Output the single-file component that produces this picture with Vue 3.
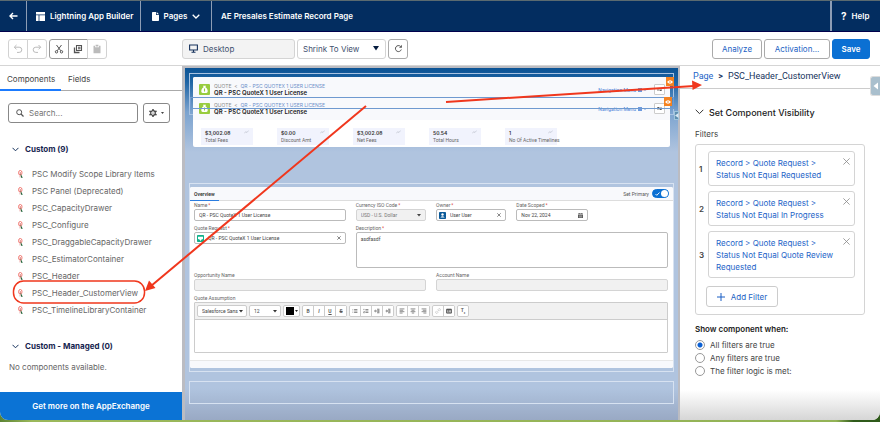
<script setup>
import { ref } from 'vue'

const search = ref('')
const fit = ref('Shrink To View')
const device = ref('Desktop')
const showWhen = ref('all')
const primary = ref(true)

const components = [
  'PSC Modify Scope Library Items',
  'PSC Panel (Deprecated)',
  'PSC_CapacityDrawer',
  'PSC_Configure',
  'PSC_DraggableCapacityDrawer',
  'PSC_EstimatorContainer',
  'PSC_Header',
  'PSC_Header_CustomerView',
  'PSC_TimelineLibraryContainer'
]

const metrics = [
  { value: '$3,002.08', label: 'Total Fees' },
  { value: '$0.00', label: 'Discount Amt' },
  { value: '$3,002.08', label: 'Net Fees' },
  { value: '50.54', label: 'Total Hours' },
  { value: '1', label: 'No Of Active Timelines' }
]

const filters = ref([
  'Status Not Equal Requested',
  'Status Not Equal In Progress',
  'Status Not Equal Quote Review Requested'
])

const rules = [
  { id: 'all', label: 'All filters are true' },
  { id: 'any', label: 'Any filters are true' },
  { id: 'logic', label: 'The filter logic is met:' }
]

// editor buttons, drawn on a 10x10 grid
const editorGroups = [
  [
    { name: 'Bold', letter: 'B' },
    { name: 'Italic', letter: 'I' },
    { name: 'Underline', letter: 'U' },
    { name: 'Strikethrough', letter: 'S' }
  ],
  [
    { name: 'Bulleted list', d: 'M3.5 2.5H9M3.5 5H9M3.5 7.5H9M1 2.5h1M1 5h1M1 7.5h1' },
    { name: 'Numbered list', d: 'M4 2.5H9M4 5H9M4 7.5H9M1.5 1.5v2M1 6h1.5L1 8h1.5' },
    { name: 'Indent', d: 'M5 2H9M1 5H9M5 8H9M3 3.2L1 5l2 1.8M6 3.5h3M6 6.5h3' },
    { name: 'Outdent', d: 'M5 2H9M1 5H9M5 8H9M2 3.2L4 5l-2 1.8M6 3.5h3M6 6.5h3' }
  ],
  [
    { name: 'Align left', d: 'M1 1.5H9M1 3.8H7M1 6.1H9M1 8.4H6' },
    { name: 'Align center', d: 'M1 1.5H9M2.5 3.8H7.5M1 6.1H9M3 8.4H7' },
    { name: 'Align right', d: 'M1 1.5H9M3 3.8H9M1 6.1H9M4 8.4H9' }
  ],
  [
    { name: 'Link', d: 'M4 6L6.5 3.5M4.5 3L6 1.5a1.6 1.6 0 0 1 2.4 2.4L7 5.4M5.5 7L4 8.5a1.6 1.6 0 0 1-2.4-2.4L3 4.6', off: true },
    { name: 'Image', d: 'M1 2h8v6.5H1zM1.5 2.6h7M2 6.8h6M3 5h2M2 3.5h6', bold: true }
  ],
  [{ name: 'Remove formatting', letter: 'T', sub: 'x' }]
]

function removeFilter(index) {
  filters.value.splice(index, 1)
}
</script>

<template>
  <div class="desktop">
    <div class="window">
      <header class="top-bar">
        <a class="top-cell back" href="#" aria-label="Back">
          <svg width="9" height="8" viewBox="0 0 9 8"><path d="M8.5 4H1.5M4 1L1 4l3 3" fill="none" stroke="#fff" stroke-width="1.4" /></svg>
        </a>
        <a class="top-cell builder" href="#">
          <svg width="9" height="9" viewBox="0 0 9 9"><path d="M0 0h9v2.5H0zM0 3.3h2.6V9H0zM3.4 3.3H9V9H3.4z" fill="#fff" /></svg>
          Lightning App Builder
        </a>
        <button class="top-cell pages" type="button">
          <svg width="7" height="9" viewBox="0 0 7 9"><path d="M.8 0H4v3h3v5.2a.8.8 0 0 1-.8.8H.8a.8.8 0 0 1-.8-.8V.8A.8.8 0 0 1 .8 0zM4.7 0L7 2.3H4.7z" fill="#fff" /></svg>
          Pages
          <svg width="8" height="5" viewBox="0 0 8 5"><path d="M.7.7L4 4 7.3.7" fill="none" stroke="#fff" stroke-width="1.3" /></svg>
        </button>
        <div class="top-cell page-name">AE Presales Estimate Record Page</div>
        <a class="top-cell help" href="#"><span class="question">?</span> Help</a>
      </header>

      <div class="toolbar">
        <div class="tools">
          <div class="button-group">
            <button type="button" class="tool off" aria-label="Undo">
              <svg width="10" height="10" viewBox="0 0 10 10"><path d="M3.5 1L1.3 3.2l2.2 2.2M1.5 3.2h4.7a2.6 2.6 0 0 1 0 5.200H4" fill="none" stroke="currentColor" /></svg>
            </button>
            <button type="button" class="tool off" aria-label="Redo">
              <svg width="10" height="10" viewBox="0 0 10 10"><path d="M6.5 1l2.2 2.2-2.2 2.2M8.5 3.2H3.8a2.6 2.6 0 0 0 0 5.200H6" fill="none" stroke="currentColor" /></svg>
            </button>
          </div>
          <div class="button-group">
            <button type="button" class="tool" aria-label="Cut">
              <svg width="10" height="10" viewBox="0 0 10 10"><path d="M2.5 1l4.300 5.800M7.500 1L3.200 6.800" fill="none" stroke="currentColor" /><circle cx="2.500" cy="7.800" r="1.200" fill="none" stroke="currentColor" /><circle cx="7.500" cy="7.800" r="1.200" fill="none" stroke="currentColor" /></svg>
            </button>
            <button type="button" class="tool" aria-label="Copy">
              <svg width="10" height="10" viewBox="0 0 10 10"><path d="M3.500 1.500h5v5h-5zM5 3.300h2.500M5 4.800h2.500" fill="none" stroke="currentColor" stroke-width="1.100" /><path d="M1.500 3.500v5h5" fill="none" stroke="currentColor" stroke-width="1.300" /></svg>
            </button>
            <button type="button" class="tool off" aria-label="Paste">
              <svg width="10" height="10" viewBox="0 0 10 10"><path d="M1.500 1.800H3v1.400h4V1.800h1.500v7.400h-7zM3.600.8h2.800v1.600H3.600z" fill="currentColor" /></svg>
            </button>
          </div>
        </div>
        <div class="view-tools">
          <label class="picker device">
            <svg width="9" height="9" viewBox="0 0 9 9"><path d="M.6 1h7.800v5H.6zM4.500 6v2M2.500 8.200h4" fill="none" stroke="#16325c" stroke-width="1.100" /></svg>
            <select v-model="device" aria-label="Device"><option>Desktop</option></select>
          </label>
          <label class="picker fit">
            <select v-model="fit" aria-label="Zoom"><option>Shrink To View</option></select>
            <svg width="6" height="5" viewBox="0 0 6 5"><path d="M0 0h6L3 4.500z" fill="#061c3f" /></svg>
          </label>
          <button type="button" class="square" aria-label="Refresh">
            <svg width="9" height="9" viewBox="0 0 9 9"><path d="M7.300 5.500A3 3 0 1 1 6.500 2.400" fill="none" stroke="#555" /><path d="M7.900.8v3H5z" fill="#555" /></svg>
          </button>
        </div>
        <div class="actions">
          <button type="button" class="action">Analyze</button>
          <button type="button" class="action wide">Activation...</button>
          <button type="button" class="action save">Save</button>
        </div>
      </div>

      <div class="panels">
        <aside class="left-panel">
          <nav class="tabs">
            <a class="tab active" href="#">Components</a>
            <a class="tab" href="#">Fields</a>
          </nav>
          <div class="search-row">
            <label class="search">
              <svg width="8" height="8" viewBox="0 0 8 8"><circle cx="3.200" cy="3.200" r="2.500" fill="none" stroke="#555" /><path d="M5 5l2.500 2.500" stroke="#555" stroke-width="1.200" /></svg>
              <input v-model="search" type="text" placeholder="Search..." aria-label="Search" />
            </label>
            <button type="button" class="gear" aria-label="Settings">
              <svg width="8" height="8" viewBox="0 0 8 8"><circle cx="4" cy="4" r="2.300" fill="none" stroke="#444" stroke-width="1.200" /><path d="M4 0v1.500M4 6.500V8M.5 2l1.300.8M6.200 5.200l1.300.8M.5 6l1.300-.8M6.200 2.800L7.500 2" stroke="#444" stroke-width="1.500" /><circle cx="4" cy="4" r=".6" fill="#444" /></svg>
              <svg width="3" height="2" viewBox="0 0 3 2"><path d="M0 0h3L1.500 2z" fill="#444" /></svg>
            </button>
          </div>
          <h2 class="group-title">
            <svg width="7" height="5" viewBox="0 0 7 5"><path d="M.5.8l3 3 3-3" fill="none" stroke="#16325c" /></svg>
            Custom (9)
          </h2>
          <ul class="component-list">
            <li v-for="name in components" :key="name">
              <svg width="5" height="8" viewBox="0 0 5 8"><ellipse cx="2.300" cy="2.800" rx="1.700" ry="2.400" fill="#fff" stroke="#ee6a62" stroke-width=".9" /><path d="M2.300 2v3M1.500 6.800h1" stroke="#d9534f" stroke-width=".7" /><path d="M2.500 3.500L4.800 7.800H3z" fill="#22663c" /></svg>
              {{ name }}
            </li>
          </ul>
          <h2 class="group-title managed">
            <svg width="7" height="5" viewBox="0 0 7 5"><path d="M.5.8l3 3 3-3" fill="none" stroke="#16325c" /></svg>
            Custom - Managed (0)
          </h2>
          <p class="none">No components available.</p>
          <a class="exchange" href="#">Get more on the AppExchange</a>
        </aside>

        <main class="canvas">
          <section class="header-region">
            <div class="quote-card">
              <div v-for="n in 2" :key="n" class="quote-header">
                <svg class="quote-icon" width="11" height="11" viewBox="0 0 11 11"><rect width="11" height="11" rx="1" fill="#98cc3f" /><path d="M4 1.800h3l-.6 1.500c1.600.9 2.300 2.400 2.300 4 0 1-.6 1.700-1.400 1.700H3.700c-.8 0-1.400-.7-1.400-1.700 0-1.600.7-3.100 2.300-4z" fill="#fff" /><path d="M5.500 4.500v3" stroke="#98cc3f" stroke-width="1.100" /></svg>
                <div class="quote-text">
                  <div class="crumbs">QUOTE &nbsp;&lt;&nbsp; <a href="#">QR - PSC QUOTEX 1 USER LICENSE</a></div>
                  <h1>QR - PSC QuoteX 1 User License</h1>
                </div>
                <a class="nav-menu" href="#">
                  Navigation Menu
                  <svg width="8" height="4" viewBox="0 0 8 4"><path d="M0 0h4v4H0z" fill="#6d9be0" /><path d="M6 1.500h2L7 3z" fill="#3d7fe0" /></svg>
                </a>
                <button type="button" class="swap" aria-label="Refresh quote">
                  <svg width="5" height="5" viewBox="0 0 5 5"><path d="M1 4V1.500h1.500M4 1v2.500H2.500M0 2.200l1-1 1 1M3 2.800l1 1 1-1" fill="none" stroke="#444" stroke-width=".7" /></svg>
                </button>
              </div>
              <div class="metrics">
                <div v-for="m in metrics" :key="m.label" class="metric">
                  <div class="metric-value">
                    {{ m.value }}
                    <svg width="5" height="4" viewBox="0 0 5 4"><path d="M.4 3.300l1.300-1.600 1.200.8L4.600.6" fill="none" stroke="#b4b8c4" stroke-width=".6" /></svg>
                  </div>
                  <div class="metric-label">{{ m.label }}</div>
                </div>
              </div>
            </div>
            <div class="selected-frame"></div>
            <span class="badge first"><svg width="6" height="4" viewBox="0 0 6 4"><path d="M0 2q3-3.500 6 0-3 3.500-6 0" fill="#fff" /><circle cx="3" cy="2" r=".8" fill="#f58220" /></svg></span>
            <span class="badge second"><svg width="6" height="4" viewBox="0 0 6 4"><path d="M0 2q3-3.500 6 0-3 3.500-6 0" fill="#fff" /><circle cx="3" cy="2" r=".8" fill="#f58220" /></svg></span>
            <span class="edge-mark"><svg width="4" height="5" viewBox="0 0 4 5"><path d="M3.500 0v5L0 2.500z" fill="#dce8f2" /></svg></span>
          </section>

          <section class="form-region">
            <form class="form-card" @submit.prevent>
              <div class="form-tabs">
                <a class="form-tab" href="#">Overview</a>
                <label class="primary">
                  Set Primary
                  <input v-model="primary" type="checkbox" />
                  <span class="switch"><svg width="5" height="4" viewBox="0 0 5 4"><path d="M.5 2l1.300 1.300L4.500.5" fill="none" stroke="#fff" stroke-width=".9" /></svg></span>
                </label>
              </div>
              <div class="fields">
                <div class="field name">
                  <label for="name">Name<i>*</i></label>
                  <div class="box"><input id="name" type="text" value="QR - PSC QuoteX 1 User License" /></div>
                </div>
                <div class="field">
                  <label for="currency">Currency ISO Code<i>*</i></label>
                  <div class="box disabled">
                    <select id="currency" disabled><option>USD - U.S. Dollar</option></select>
                    <svg width="4" height="3" viewBox="0 0 4 3"><path d="M0 0h4L2 2.500z" fill="#444" /></svg>
                  </div>
                </div>
                <div class="field">
                  <label for="owner">Owner<i>*</i></label>
                  <div class="box lookup">
                    <svg width="7" height="7" viewBox="0 0 7 7"><rect width="7" height="7" rx=".8" fill="#0b5a99" /><circle cx="3.500" cy="2.500" r="1.200" fill="#fff" /><path d="M1.300 5.500q2.200-2.500 4.400 0z" fill="#fff" /></svg>
                    <input id="owner" type="text" value="User User" />
                    <button type="button" aria-label="Clear owner"><svg width="4" height="4" viewBox="0 0 4 4"><path d="M.3.3l3.400 3.400M3.700.3L.3 3.700" stroke="#555" stroke-width=".7" /></svg></button>
                  </div>
                </div>
                <div class="field">
                  <label for="scoped">Date Scoped<i>*</i></label>
                  <div class="box">
                    <input id="scoped" type="text" value="Nov 22, 2024" />
                    <svg width="5" height="5" viewBox="0 0 5 5"><path d="M0 .6h5v1H0zM0 2h5v3H0zM1 0h.6v1H1zM3.400 0H4v1h-.6z" fill="#555" /><path d="M.8 3h3.400M.8 4h3.400" stroke="#fff" stroke-width=".4" /></svg>
                  </div>
                </div>
                <div class="field request">
                  <label for="request">Quote Request<i>*</i></label>
                  <div class="box lookup">
                    <svg width="7" height="7" viewBox="0 0 7 7"><rect width="7" height="7" rx=".8" fill="#10b28b" /><path d="M1 1.800h5V4L4.500 4.600 3.500 6 2.500 4.600 1 4z" fill="#fff" /></svg>
                    <input id="request" type="text" value="QR - PSC QuoteX 1 User License" />
                    <button type="button" aria-label="Clear quote request"><svg width="4" height="4" viewBox="0 0 4 4"><path d="M.3.3l3.400 3.400M3.700.3L.3 3.700" stroke="#555" stroke-width=".7" /></svg></button>
                  </div>
                </div>
                <div class="field description">
                  <label for="description">Description<i>*</i></label>
                  <textarea id="description">asdfasdf</textarea>
                </div>
                <div class="field half">
                  <label for="opportunity">Opportunity Name</label>
                  <div class="box disabled"><input id="opportunity" type="text" disabled /></div>
                </div>
                <div class="field half-end">
                  <label for="account">Account Name</label>
                  <div class="box disabled"><input id="account" type="text" disabled /></div>
                </div>
                <div class="field full">
                  <label for="assumption">Quote Assumption</label>
                  <div class="editor">
                    <div class="editor-bar">
                      <div class="box font">
                        <select aria-label="Font"><option>Salesforce Sans</option></select>
                        <svg width="4" height="3" viewBox="0 0 4 3"><path d="M0 0h4L2 2.500z" fill="#333" /></svg>
                      </div>
                      <div class="box size">
                        <select aria-label="Font size"><option>12</option></select>
                        <svg width="4" height="3" viewBox="0 0 4 3"><path d="M0 0h4L2 2.500z" fill="#333" /></svg>
                      </div>
                      <button type="button" class="color" aria-label="Text color">
                        <span class="swatch"></span>
                        <svg width="3" height="2" viewBox="0 0 3 2"><path d="M0 0h3L1.500 2z" fill="#222" /></svg>
                      </button>
                      <div v-for="(group, g) in editorGroups" :key="g" class="editor-group">
                        <button v-for="b in group" :key="b.name" type="button" :class="[b.name.toLowerCase(), { off: b.off }]" :aria-label="b.name">
                          <span v-if="b.letter">{{ b.letter }}<sub v-if="b.sub">{{ b.sub }}</sub></span>
                          <svg v-else width="6" height="6" viewBox="0 0 10 10"><path :d="b.d" fill="none" stroke="currentColor" :stroke-width="b.bold ? 1.6 : 1.1" /></svg>
                        </button>
                      </div>
                    </div>
                    <textarea id="assumption"></textarea>
                  </div>
                </div>
              </div>
              <div class="form-footer"></div>
            </form>
          </section>

          <section class="empty-region"></section>
        </main>

        <aside class="right-panel">
          <button type="button" class="collapse" aria-label="Collapse panel">
            <svg width="6" height="8" viewBox="0 0 6 8"><path d="M5 .5v7L.5 4z" fill="#fff" /></svg>
          </button>
          <nav class="path"><a href="#">Page</a><b>&gt;</b><span>PSC_Header_CustomerView</span></nav>
          <div class="visibility">
            <h2>
              <svg width="9" height="6" viewBox="0 0 9 6"><path d="M.7.8l3.800 3.800L8.300.8" fill="none" stroke="#333" /></svg>
              Set Component Visibility
            </h2>
            <p class="caption">Filters</p>
            <div class="filter-box">
              <div v-for="(text, i) in filters" :key="text" class="filter-row">
                <span class="number">{{ i + 1 }}</span>
                <div class="filter">
                  <a href="#">Record &gt; Quote Request &gt;<br />{{ text }}</a>
                  <button type="button" aria-label="Remove filter" @click="removeFilter(i)">
                    <svg width="7" height="7" viewBox="0 0 7 7"><path d="M.4.4l6.200 6.200M6.600.4L.4 6.600" stroke="#888" stroke-width=".8" /></svg>
                  </button>
                </div>
              </div>
              <button type="button" class="add">
                <svg width="8" height="8" viewBox="0 0 8 8"><path d="M4 0v8M0 4h8" stroke="#1b5fc4" /></svg>
                Add Filter
              </button>
            </div>
            <fieldset>
              <legend>Show component when:</legend>
              <label v-for="rule in rules" :key="rule.id" class="rule">
                <input v-model="showWhen" type="radio" name="rule" :value="rule.id" />
                {{ rule.label }}
              </label>
            </fieldset>
          </div>
        </aside>
      </div>
    </div>

    <svg class="notes" viewBox="0 0 880 422" preserveAspectRatio="none">
      <g fill="none" stroke="#f0371d" stroke-width="2">
        <path d="M366 106L151 286" />
        <path d="M446 102L694 86" />
        <rect x="13.500" y="281" width="131" height="22" rx="10" stroke-width="1.500" />
      </g>
      <path d="M145 291l4-10.500 6.500 7.500zM702 85l-10-4.500.6 9.500z" fill="#f0371d" />
    </svg>
  </div>
</template>

<style>
body {
  margin: 0;
}
</style>

<style scoped>
.desktop {
  position: relative;
  min-height: 100vh;
  display: flex;
  flex-direction: column;
  box-sizing: border-box;
  padding-bottom: 2px;
  background: linear-gradient(90deg, #5c8434 0, #9bb85b 32px, #93b356 95%, #2f5a1a 97%);
  font-family: Inter, "Liberation Sans", sans-serif;
  font-size: 8px;
  color: #444;
}

.desktop * {
  box-sizing: border-box;
}

.window {
  flex: 1;
  display: flex;
  flex-direction: column;
  background: #fff;
  border-radius: 0 0 8px 8px;
  overflow: hidden;
}

svg {
  display: block;
  flex: none;
}

a {
  color: #2464c8;
  text-decoration: none;
}

button, input, select, textarea {
  font: inherit;
  color: inherit;
  margin: 0;
  padding: 0;
}

button {
  display: flex;
  align-items: center;
  justify-content: center;
  border: 0;
  background: #fff;
}

input[type='text'], select, textarea {
  flex: 1;
  min-width: 0;
  width: 100%;
  border: 0;
  outline: 0;
  background: transparent;
  appearance: none;
}

select {
  opacity: 1;
}

h1, h2, p, ul {
  margin: 0;
  padding: 0;
}

/* top bar */
.top-bar {
  display: flex;
  height: 32px;
  border-top: 1px solid #5b6a70;
  border-bottom: 1px solid #01014c;
  background: #032d60;
  font-weight: 600;
}

.top-cell {
  display: flex;
  align-items: center;
  gap: 5px;
  padding: 0 9px;
  color: #fff;
  background: #032d60;
  border-right: 1px solid #8d9db5;
  white-space: nowrap;
}

.back {
  width: 27px;
}

.builder {
  width: 114px;
}

.pages {
  width: 71px;
}

.page-name {
  flex: 1;
}

.help {
  width: 49px;
  border-right: 0;
  border-left: 1px solid #8d9db5;
}

.question {
  font-size: 10px;
  font-weight: 700;
}

/* toolbar */
.toolbar {
  display: flex;
  height: 34px;
  align-items: center;
  padding: 0 10px 0 8px;
  border-bottom: 1px solid #d5d5d5;
}

.tools {
  width: 174px;
  display: flex;
  gap: 2px;
}

.button-group {
  display: flex;
}

.tool {
  width: 20px;
  height: 20px;
  border: 1px solid #999;
  color: #555;
}

.tool + .tool {
  margin-left: -1px;
}

.tool:first-child {
  border-radius: 3px 0 0 3px;
}

.tool:last-child {
  border-radius: 0 3px 3px 0;
}

.tool.off {
  border-color: #d2d2d2;
  color: #bbb;
}

.view-tools {
  display: flex;
  gap: 2px;
}

.picker {
  display: flex;
  align-items: center;
  gap: 5px;
  height: 20px;
  padding: 0 6px;
  border: 1px solid #d4d4d4;
  border-radius: 3px;
  color: #3e4f6e;
}

.device {
  width: 113px;
  background: #f3f3f3;
}

.fit {
  width: 89px;
  padding: 0 6px 0 5px;
}

.square {
  width: 20px;
  height: 20px;
  border: 1px solid #aaa;
  border-radius: 3px;
}

.actions {
  flex: 1;
  display: flex;
  justify-content: flex-end;
  gap: 2px;
}

.action {
  width: 50px;
  height: 20px;
  border: 1px solid #aaa;
  border-radius: 3px;
  color: #1b5fc4;
}

.action.wide {
  width: 66px;
}

.action.save {
  width: 38px;
  border-color: #0b70d3;
  background: #0b70d3;
  color: #fff;
  font-weight: 600;
}

.panels {
  flex: 1;
  display: grid;
  grid-template-columns: 182px 1fr 200px;
}

/* components panel */
.left-panel {
  display: flex;
  flex-direction: column;
}

.tabs {
  display: flex;
  height: 25px;
  border-bottom: 1px solid #aaa;
}

.tab {
  display: flex;
  align-items: center;
  padding: 2px 7px 0;
  color: #444;
}

.tab.active {
  width: 61px;
  height: 25px;
  border-bottom: 2px solid #1b7bff;
}

.search-row {
  display: flex;
  gap: 5px;
  padding: 12px 12px 0 8px;
}

.search {
  flex: 1;
  display: flex;
  align-items: center;
  gap: 5px;
  height: 20px;
  padding: 0 7px;
  border: 1px solid #888;
  border-radius: 3px;
}

.search input::placeholder {
  color: #747474;
  opacity: 1;
}

.gear {
  width: 27px;
  height: 20px;
  gap: 4px;
  border: 1px solid #888;
  border-radius: 3px;
}

.group-title {
  display: flex;
  align-items: center;
  gap: 6px;
  height: 16px;
  margin-top: 18px;
  padding-left: 12px;
  font-size: 8px;
  font-weight: 700;
  color: #16254f;
}

.component-list {
  list-style: none;
  margin-top: 8px;
}

.component-list li {
  display: flex;
  align-items: center;
  gap: 9px;
  height: 17px;
  padding-left: 18px;
  color: #666;
}

.managed {
  margin-top: 20px;
}

.none {
  margin-top: 8px;
  padding-left: 9px;
  line-height: 10px;
  color: #666;
}

.exchange {
  display: flex;
  align-items: center;
  justify-content: center;
  height: 28px;
  margin-top: auto;
  background: #0b73d5;
  color: #fff;
  font-weight: 600;
}

/* page preview */
.canvas {
  display: flex;
  flex-direction: column;
  padding: 6px 4px 0;
  border: solid #bbbcc2;
  border-width: 2px 2px 0 3px;
  background: linear-gradient(#0b5394 0, #1e64a4 14px, #7ba3cf 44px, #b0c4df 84px, #b0c4df 320px, #99a9c4 100%);
  font-size: 5px;
}

.header-region {
  position: relative;
  padding: 3px 4px 0;
}

.header-region::before {
  content: "";
  position: absolute;
  inset: -1px 0 auto;
  height: 40px;
  border: 1px solid #a9c3e2;
}

.quote-card {
  position: relative;
  border-radius: 2px;
  overflow: hidden;
  background: #fff;
}

.quote-header {
  display: flex;
  align-items: center;
  gap: 4px;
  height: 20px;
  padding: 5px 5px 0 6px;
  background: #f8f9fc;
}

.quote-header + .quote-header {
  height: 23px;
  padding: 0 5px 0 6px;
}

.quote-text {
  flex: 1;
}

.crumbs {
  line-height: 6px;
  font-size: 5px;
  color: #8a8a8a;
}

.crumbs a {
  color: #6d8fc9;
}

h1 {
  font-size: 6px;
  line-height: 7px;
  font-weight: 600;
  color: #222;
}

.nav-menu {
  display: flex;
  align-items: center;
  gap: 2px;
  margin-right: 4px;
  font-family: Roboto, sans-serif;
  color: #4a82d8;
}

.swap {
  width: 11px;
  height: 11px;
  border: 1px solid #ccc;
  border-radius: 1px;
}

.metrics {
  display: flex;
  gap: 24px;
  padding: 8px 8px 2px;
}

.metric {
  width: 52px;
  height: 17px;
  padding: 2px 4px 0;
  background: #f1f3fd;
  white-space: nowrap;
}

.metric-value {
  display: flex;
  justify-content: space-between;
  line-height: 7px;
  font-weight: 600;
  color: #333;
}

.metric-label {
  font-family: Roboto, sans-serif;
  line-height: 6px;
  color: #666;
}

.selected-frame {
  position: absolute;
  inset: 23px 0 auto 1px;
  height: 12px;
  border: 1px solid #6f9ad0;
}

.badge {
  position: absolute;
  display: flex;
  align-items: center;
  justify-content: center;
  width: 8px;
  height: 9px;
  background: #f58220;
}

.badge.first {
  top: 3px;
  right: 0;
}

.badge.second {
  top: 23px;
  right: 2px;
}

.edge-mark {
  position: absolute;
  top: 37px;
  right: -5px;
  display: flex;
  align-items: center;
  width: 5px;
  height: 9px;
  border: 1px solid #9ec4dc;
  background: #5f8fb0;
}

.form-region {
  margin-top: 36px;
  padding: 3px 0;
  border: 1px solid #d7e2f1;
  font-family: Roboto, "Liberation Sans", sans-serif;
}

.form-card {
  background: #fff;
  border-radius: 2px;
  overflow: hidden;
}

.form-tabs {
  display: flex;
  justify-content: space-between;
  height: 14px;
  padding-right: 4px;
  border-bottom: 1px solid #ddd;
  background: #f8f9fc;
}

.form-tab {
  display: flex;
  align-items: center;
  width: 29px;
  height: 14px;
  padding: 0 4px;
  border-bottom: 1px solid #2b7de0;
  color: #333;
  font-weight: 600;
}

.primary {
  display: flex;
  align-items: center;
  gap: 3px;
  color: #555;
}

.primary input {
  position: absolute;
  opacity: 0;
}

.switch {
  display: flex;
  align-items: center;
  justify-content: space-between;
  width: 17px;
  height: 9px;
  padding-left: 2px;
  border: 1px solid #0b70d3;
  border-radius: 5px;
  background: #0b70d3;
}

.switch::after {
  content: "";
  width: 7px;
  height: 7px;
  border-radius: 4px;
  background: #fff;
}

.fields {
  display: grid;
  grid-template-columns: 151fr 70fr 70fr 71fr 70fr;
  column-gap: 10px;
  padding: 1px 5px 7px 4px;
}

.field label {
  display: block;
  height: 7px;
  line-height: 7px;
  color: #666;
  white-space: nowrap;
}

.field i {
  margin-left: 1px;
  color: #e0483c;
  font-style: normal;
}

.name, .request {
  grid-column: 1;
}

.request, .description, .half, .half-end, .full {
  margin-top: 4px;
}

.description {
  grid-column: 2 / -1;
}

.half {
  grid-column: 1 / 3;
}

.half-end {
  grid-column: 3 / -1;
}

.full {
  grid-column: 1 / -1;
}

.box {
  display: flex;
  align-items: center;
  gap: 3px;
  height: 12px;
  padding: 0 4px;
  border: 1px solid #bbb;
  border-radius: 2px;
  background: #fff;
}

.box.lookup {
  padding: 0 3px 0 2px;
  gap: 4px;
}

.box.lookup button {
  width: 6px;
}

.box.disabled {
  background: #f1f1f1;
  border-color: #d4d4d4;
  color: #777;
}

.description textarea {
  display: block;
  height: 36px;
  padding: 3px 4px;
  border: 1px solid #bbb;
  border-radius: 2px;
  resize: none;
}

.editor {
  border: 1px solid #ccc;
  border-radius: 1px;
}

.editor-bar {
  display: flex;
  gap: 2px;
  height: 17px;
  padding: 2px;
  border-bottom: 1px solid #ccc;
  background: #f1f1f1;
}

.editor-bar .box {
  padding: 0 3px 0 4px;
  gap: 1px;
  border-color: #ccc;
}

.editor-bar .font {
  width: 50px;
}

.editor-bar .size {
  width: 32px;
}

.color {
  width: 17px;
  height: 12px;
  gap: 1px;
  border: 1px solid #ccc;
  border-radius: 2px;
}

.swatch {
  width: 8px;
  height: 8px;
  background: #000;
}

.editor-group {
  display: flex;
  height: 12px;
  border: 1px solid #ccc;
  border-radius: 2px;
  background: #fff;
}

.editor-group button {
  width: 10px;
  height: 10px;
  border-radius: 2px;
  color: #555;
  font-weight: 600;
}

.editor-group button + button {
  width: 11px;
  border-left: 1px solid #ccc;
  border-radius: 0;
}

.editor-group .italic {
  font-style: italic;
}

.editor-group .underline {
  text-decoration: underline;
}

.editor-group .strikethrough {
  text-decoration: line-through;
}

.editor-group .off {
  color: #bbb;
}

sub {
  font-size: 3px;
}

.editor textarea {
  display: block;
  height: 32px;
  resize: none;
}

.form-footer {
  height: 8px;
  border-top: 1px solid #e8e8e8;
  background: #f8f9fc;
}

.empty-region {
  height: 23px;
  margin-top: 9px;
  border: 1px solid #d7e2f1;
}

/* properties panel */
.right-panel {
  position: relative;
  background: linear-gradient(transparent calc(100% - 30px), #d6d6d6);
}

.path {
  display: flex;
  align-items: center;
  gap: 5px;
  height: 23px;
  padding: 0 13px 3px;
  border-bottom: 1px solid #ccc;
  font-family: Roboto, "Liberation Sans", sans-serif;
  font-size: 9px;
  color: #16325c;
}

.collapse {
  position: absolute;
  top: 10px;
  right: 0;
  width: 10px;
  height: 20px;
  border: 1px solid #ddd;
  border-right: 0;
  border-radius: 3px 0 0 3px;
  background: #a9bfcd;
}

.visibility {
  padding: 15px 15px 0;
}

.visibility h2 {
  display: flex;
  align-items: center;
  gap: 5px;
  height: 16px;
  font-size: 9px;
  font-weight: 500;
  color: #222;
}

.caption {
  margin-top: 8px;
  line-height: 12px;
}

.filter-box {
  margin-top: 4px;
  padding: 6px 9px 7px 3px;
  border: 1px solid #d4d4d4;
  border-radius: 3px;
}

.filter-row {
  display: flex;
  align-items: center;
  margin-bottom: 5px;
}

.number {
  width: 9px;
  font-weight: 600;
}

.filter {
  flex: 1;
  display: flex;
  justify-content: space-between;
  align-items: flex-start;
  padding: 5px 4px 4px 7px;
  border: 1px solid #d4d4d4;
  border-radius: 3px;
  line-height: 12px;
}

.filter a {
  max-width: 124px;
}

.filter button {
  margin-top: 1px;
  background: none;
}

.add {
  width: 72px;
  height: 21px;
  gap: 6px;
  margin: 8px 0 0 7px;
  border: 1px solid #ccc;
  border-radius: 3px;
  color: #1b5fc4;
}

fieldset {
  margin: 8px 0 0;
  padding: 0;
  border: 0;
}

legend {
  padding: 0;
  line-height: 12px;
  font-weight: 600;
  color: #222;
}

.rule {
  display: flex;
  align-items: center;
  gap: 5px;
  height: 13px;
}

.rule input {
  appearance: none;
  width: 10px;
  height: 10px;
  border: 1px solid #999;
  border-radius: 5px;
  background: #fff;
}

.rule input:checked {
  background: radial-gradient(circle, #0b60d3 2px, #fff 3px);
}

.rule:first-of-type {
  margin-top: 3px;
}

.notes {
  position: absolute;
  inset: 0;
  width: 100%;
  height: 100%;
  pointer-events: none;
}
</style>
